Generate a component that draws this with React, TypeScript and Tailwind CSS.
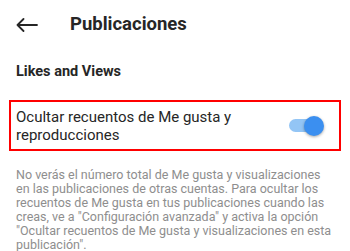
import React from "react";

export default function App() {
  return (
    <div className="w-[350px] h-[251px] overflow-hidden bg-white text-[#262626]" style={{ fontFamily: "Roboto, 'Liberation Sans', sans-serif" }}>
      <div className="flex items-center h-[50px] pl-[16px]">
        <svg width="22" height="14" viewBox="0 0 22 14" fill="none" stroke="#262626" strokeWidth="1.8" strokeLinecap="round" strokeLinejoin="round">
          <path d="M21 7H1.5M7.5 1L1.5 7l6 6" />
        </svg>
        <div className="ml-[32px] text-[18.5px] font-bold text-[#262626]">Publicaciones</div>
      </div>
      <div className="pl-[16px] mt-[12px] text-[14.5px] font-bold leading-[20px]">Likes and Views</div>
      <div className="mx-[9px] mt-[18px] h-[51px] border-2 border-[#ff0000] flex items-center pl-[5px] pr-[14px]">
        <div className="flex-1 text-[15px] leading-[18px] text-[#262626]">Ocultar recuentos de Me gusta y reproducciones</div>
        <div className="relative w-[36px] h-[20px] flex items-center">
          <div className="absolute left-[0px] w-[31px] h-[13px] rounded-full bg-[#93c5f5]" />
          <div className="absolute left-[15px] w-[20px] h-[20px] rounded-full bg-[#3b8ff0] shadow-[0_1px_3px_rgba(0,0,0,0.35)]" />
        </div>
      </div>
      <div className="pl-[16px] pr-[16px] mt-[17px] text-[12.5px] leading-[14px] text-[#8e8e8e]">
        No verás el número total de Me gusta y visualizaciones en las publicaciones de otras cuentas. Para ocultar los recuentos de Me gusta en tus publicaciones cuando las creas, ve a "Configuración avanzada" y activa la opción "Ocultar recuentos de Me gusta y visualizaciones en esta publicación".
      </div>
    </div>
  );
}
